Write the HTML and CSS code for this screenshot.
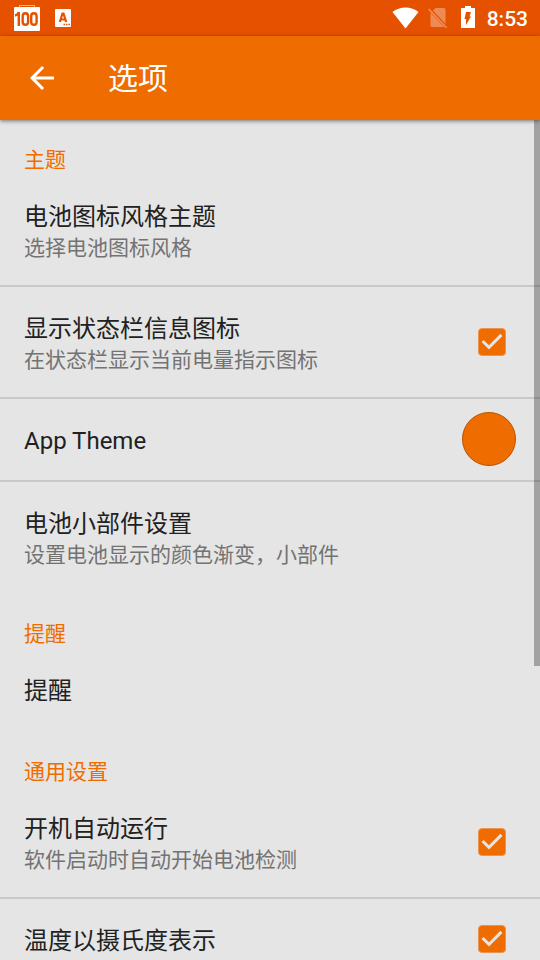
FILE: index.html
```html
<!DOCTYPE html>
<html lang="zh-CN">
<head>
<meta charset="utf-8">
<meta name="viewport" content="width=device-width, initial-scale=1">
<title>选项</title>
<link rel="stylesheet" href="styles.css">
</head>
<body>
<div class="status-bar">
  <div class="notifications">
    <svg width="26" height="26" viewBox="0 0 26 26" aria-hidden="true">
      <path d="M5.500 3V.5h15V3" fill="none" stroke="#fff" stroke-opacity=".6"/>
      <rect y="2" width="26" height="24" rx="1" fill="#fff"/>
      <g fill="none" stroke="#e65100" stroke-width="2.400">
        <path d="M1 10.500Q4 10 4.800 7V21"/>
        <rect x="8.700" y="8.200" width="5.400" height="11.600" rx="2.700"/>
        <rect x="17.200" y="8.200" width="5.400" height="11.600" rx="2.700"/>
      </g>
    </svg>
    <svg width="16" height="18" viewBox="0 0 16 18" aria-hidden="true">
      <rect width="16" height="18" rx="1" fill="#fff"/>
      <path d="M4.800 13L7.500 4.500h1l2.700 8.500M6 10.500h4" fill="none" stroke="#e65100" stroke-width="2.200"/>
      <path d="M8.500 15.500h1.500m1 0h1.500m1 0H15" stroke="#e65100" stroke-width="1.500"/>
    </svg>
  </div>
  <div class="system">
    <svg class="wifi" width="27" height="22" viewBox="0 0 27 22" aria-hidden="true"><path d="M13.500 21.500L.5 5Q6 .5 13.500 .5T26.500 5z" fill="#fff"/></svg>
    <svg class="sim" width="20" height="22" viewBox="0 0 20 22" aria-hidden="true">
      <path d="M7.500 1H16q1.500 0 1.500 1.500V17L5 3.500zM2.500 5.500L16 20H4q-1.500 0-1.500-1.500z" fill="#fff" opacity=".33"/>
      <path d="M.7 2L18.500 20.800" stroke="#fff" stroke-opacity=".36" stroke-width="1.600"/>
    </svg>
    <svg class="battery" width="14" height="22" viewBox="0 0 14 22" aria-hidden="true">
      <path d="M4 0h6v2h4v20H0V2h4z" fill="#fff"/>
      <path d="M5 6h5L8.500 10.500H10L5 19V13H3.500z" fill="#e65100"/>
    </svg>
    <time>8:53</time>
  </div>
</div>
<header class="toolbar">
  <button class="back" type="button" aria-label="返回">
    <svg width="36" height="36" viewBox="0 0 24 24" aria-hidden="true"><path d="M20 11H7.830l5.590-5.590L12 4l-8 8 8 8 1.410-1.410L7.830 13H20z" fill="#fff"/></svg>
  </button>
  <h1>选项</h1>
</header>
<main class="settings">
  <section>
    <h2>主题</h2>
    <button class="row" type="button">
      <span class="text"><span class="title">电池图标风格主题</span><span class="summary">选择电池图标风格</span></span>
    </button>
    <label class="row">
      <span class="text"><span class="title">显示状态栏信息图标</span><span class="summary">在状态栏显示当前电量指示图标</span></span>
      <span class="check"><input type="checkbox" checked><svg viewBox="0 0 24 24" aria-hidden="true"><path d="M10 17l-5-5 1.410-1.410L10 14.170l7.590-7.590L19 8z"/></svg></span>
    </label>
    <button class="row single" type="button">
      <span class="text"><span class="title">App Theme</span></span>
      <span class="swatch"></span>
    </button>
    <button class="row" type="button">
      <span class="text"><span class="title">电池小部件设置</span><span class="summary">设置电池显示的颜色渐变，小部件</span></span>
    </button>
  </section>
  <section>
    <h2>提醒</h2>
    <button class="row single" type="button">
      <span class="text"><span class="title">提醒</span></span>
    </button>
  </section>
  <section>
    <h2>通用设置</h2>
    <label class="row">
      <span class="text"><span class="title">开机自动运行</span><span class="summary">软件启动时自动开始电池检测</span></span>
      <span class="check"><input type="checkbox" checked><svg viewBox="0 0 24 24" aria-hidden="true"><path d="M10 17l-5-5 1.410-1.410L10 14.170l7.590-7.590L19 8z"/></svg></span>
    </label>
    <label class="row single">
      <span class="text"><span class="title">温度以摄氏度表示</span></span>
      <span class="check"><input type="checkbox" checked><svg viewBox="0 0 24 24" aria-hidden="true"><path d="M10 17l-5-5 1.410-1.410L10 14.170l7.590-7.590L19 8z"/></svg></span>
    </label>
  </section>
  <div class="scroll-thumb"></div>
</main>
</body>
</html>
```

FILE: styles.css
```css
:root {
  --primary: #ef6c00;
  --primary-dark: #e65100;
  --surface: #e5e5e5;
}

* {
  box-sizing: border-box;
}

body {
  margin: 0;
  height: 100vh;
  display: flex;
  flex-direction: column;
  overflow: hidden;
  background: var(--surface);
  color: #212121;
  font-family: Roboto, "Noto Sans CJK SC", sans-serif;
}

button {
  border: 0;
  padding: 0;
  background: none;
  color: inherit;
  font: inherit;
  text-align: left;
}

svg {
  display: block;
  flex: none;
}

.status-bar {
  flex: none;
  height: 36px;
  padding: 0 12px 0 14px;
  display: flex;
  align-items: center;
  justify-content: space-between;
  background: var(--primary-dark);
  color: #fff;
}

.notifications,
.system {
  display: flex;
  align-items: center;
}

.notifications {
  gap: 15px;
}

.system {
  gap: 9px;
}

.system time {
  margin-left: 3px;
  padding-top: 2px;
  font-size: 21px;
  font-weight: 500;
  line-height: 34px;
}

.battery {
  margin: 0 0 2px 4px;
}

.toolbar {
  flex: none;
  position: relative;
  z-index: 1;
  height: 84px;
  padding-left: 24px;
  display: flex;
  align-items: center;
  gap: 48px;
  background: var(--primary);
  color: #fff;
  box-shadow: 0 1px 4px rgba(0, 0, 0, 0.5);
}

.toolbar h1 {
  margin: 0;
  padding-top: 2px;
  font-size: 30px;
  font-weight: 400;
  line-height: 44px;
}

.settings {
  flex: 1;
  min-height: 0;
  position: relative;
  overflow: hidden;
}

section + section {
  margin-top: 2px;
}

h2 {
  margin: 0;
  padding: 28px 24px 3px;
  color: var(--primary);
  font-size: 21px;
  font-weight: 400;
  line-height: 24px;
}

.row {
  width: 100%;
  padding: 0 24px;
  display: flex;
  align-items: center;
  justify-content: space-between;
}

.row.single {
  padding-bottom: 1px;
}

.row + .row {
  border-top: 2px solid #c8c8c8;
}

.text {
  display: flex;
  flex-direction: column;
  padding: 26px 0 22px;
}

.title {
  font-size: 24px;
  line-height: 32px;
}

.summary {
  color: #737373;
  font-size: 21px;
  line-height: 30px;
}

.check {
  display: grid;
  place-items: center;
  width: 36px;
  height: 36px;
  margin-right: 6px;
}

.check > * {
  grid-area: 1 / 1;
}

.check input {
  appearance: none;
  width: 28px;
  height: 28px;
  margin: 0;
  border: 1px solid #eb9450;
  border-radius: 4px;
  background: var(--primary);
}

.check svg {
  width: 36px;
  height: 36px;
  fill: var(--surface);
  pointer-events: none;
}

.check input:not(:checked) + svg {
  display: none;
}

.swatch {
  width: 54px;
  height: 54px;
  border: 1px solid #b85300;
  border-radius: 50%;
  background: var(--primary);
}

.scroll-thumb {
  position: absolute;
  top: 0;
  right: 0;
  width: 6px;
  height: 65%;
  background: rgba(0, 0, 0, 0.29);
}
```
